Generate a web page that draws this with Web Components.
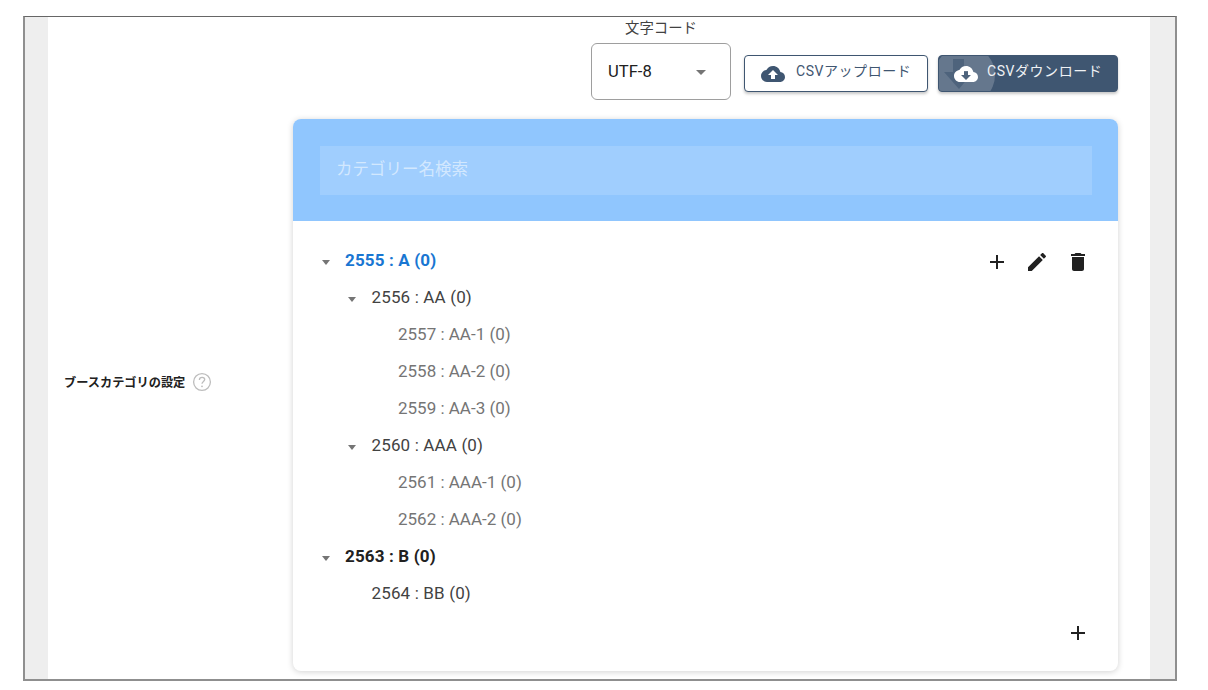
<!DOCTYPE html>
<html lang="ja">
<head>
<meta charset="utf-8">
<title>ブースカテゴリの設定</title>
<style>
    html, body {
        margin: 0;
        background: #fff;
        font-family: Roboto, "Noto Sans CJK JP", sans-serif;
    }
</style>
</head>
<body>
<settings-frame>
    <csv-toolbar slot="toolbar">
        <char-select label="文字コード" value="UTF-8"></char-select>
        <csv-button icon="upload">CSVアップロード</csv-button>
        <csv-button icon="download" filled>CSVダウンロード</csv-button>
    </csv-toolbar>
    <setting-row label="ブースカテゴリの設定">
        <category-panel placeholder="カテゴリー名検索">
            <tree-node label="2555 : A (0)" open tone="selected">
                <icon-btn slot="actions" icon="add"></icon-btn>
                <icon-btn slot="actions" icon="edit"></icon-btn>
                <icon-btn slot="actions" icon="delete"></icon-btn>
                <tree-node label="2556 : AA (0)" open tone="mid">
                    <tree-node label="2557 : AA-1 (0)" tone="leaf"></tree-node>
                    <tree-node label="2558 : AA-2 (0)" tone="leaf"></tree-node>
                    <tree-node label="2559 : AA-3 (0)" tone="leaf"></tree-node>
                </tree-node>
                <tree-node label="2560 : AAA (0)" open tone="mid">
                    <tree-node label="2561 : AAA-1 (0)" tone="leaf"></tree-node>
                    <tree-node label="2562 : AAA-2 (0)" tone="leaf"></tree-node>
                </tree-node>
            </tree-node>
            <tree-node label="2563 : B (0)" open tone="root">
                <tree-node label="2564 : BB (0)" tone="mid"></tree-node>
            </tree-node>
            <icon-btn slot="footer" icon="add"></icon-btn>
        </category-panel>
    </setting-row>
</settings-frame>

<script>
const ICONS = {
    add: 'M19 13h-6v6h-2v-6H5v-2h6V5h2v6h6v2z',
    edit: 'M3 17.25V21h3.75L17.81 9.94l-3.75-3.75L3 17.25zM20.71 7.04c.39-.39.39-1.02 0-1.41l-2.34-2.34c-.39-.39-1.02-.39-1.41 0l-1.83 1.83 3.75 3.75 1.83-1.83z',
    delete: 'M6 19c0 1.1.9 2 2 2h8c1.1 0 2-.9 2-2V7H6v12zM19 4h-3.5l-1-1h-5l-1 1H5v2h14V4z',
    upload: 'M19.35 10.04C18.67 6.59 15.64 4 12 4 9.11 4 6.6 5.64 5.35 8.04 2.34 8.36 0 10.91 0 14c0 3.31 2.69 6 6 6h13c2.76 0 5-2.24 5-5 0-2.64-2.05-4.78-4.65-4.96zM14 13v4h-4v-4H7l5-5 5 5h-3z',
    download: 'M19.35 10.04C18.67 6.59 15.64 4 12 4 9.11 4 6.6 5.64 5.35 8.04 2.34 8.36 0 10.91 0 14c0 3.31 2.69 6 6 6h13c2.76 0 5-2.24 5-5 0-2.64-2.05-4.78-4.65-4.96zM17 13l-5 5-5-5h3V9h4v4h3z'
};

function svgIcon(name, size) {
    return `<svg width="${size}" height="${size}" viewBox="0 0 24 24" fill="currentColor"><path d="${ICONS[name]}"/></svg>`;
}

class SettingsFrame extends HTMLElement {
    constructor() {
        super();
        this.attachShadow({ mode: 'open' });
        this.shadowRoot.innerHTML = `
            <style>
                :host {
                    display: block;
                    box-sizing: border-box;
                    width: 1154px;
                    height: 665px;
                    margin: 16px 0 0 23px;
                    background: #eeeeee;
                    border: 2px solid #8f8f8f;
                    border-top: 1px solid #666;
                    padding: 0 25px 0 23px;
                    overflow: hidden;
                }
                .main {
                    background: #fff;
                    height: 100%;
                }
            </style>
            <div class="main">
                <slot name="toolbar"></slot>
                <slot></slot>
            </div>
        `;
    }
}

class CsvToolbar extends HTMLElement {
    constructor() {
        super();
        this.attachShadow({ mode: 'open' });
        this.shadowRoot.innerHTML = `
            <style>
                :host {
                    display: flex;
                    justify-content: flex-end;
                    align-items: flex-end;
                    gap: 10px;
                    height: 76px;
                    padding-right: 32px;
                }
            </style>
            <slot></slot>
        `;
    }
}

class CharSelect extends HTMLElement {
    constructor() {
        super();
        this.attachShadow({ mode: 'open' });
        this.shadowRoot.innerHTML = `
            <style>
                :host {
                    display: block;
                    width: 140px;
                    margin-right: 3px;
                    margin-bottom: -7px;
                    color: #424242;
                }
                .label {
                    height: 26px;
                    line-height: 24px;
                    font-size: 14.4px;
                    text-align: center;
                }
                .box {
                    box-sizing: border-box;
                    height: 57px;
                    border: 1px solid #9e9e9e;
                    border-radius: 6px;
                    background: #fff;
                    display: flex;
                    align-items: center;
                    justify-content: space-between;
                    padding: 0 24px 0 16px;
                    font-size: 16.6px;
                    line-height: 54px;
                }
                .value { margin-top: 1px; color: #212121; }
                .arrow {
                    width: 0;
                    height: 0;
                    margin-top: 2px;
                    border: 5px solid transparent;
                    border-top-color: #757575;
                    border-bottom-width: 0;
                }
            </style>
            <div class="label">${this.getAttribute('label')}</div>
            <div class="box">
                <span class="value">${this.getAttribute('value')}</span>
                <span class="arrow"></span>
            </div>
        `;
    }
}

class CsvButton extends HTMLElement {
    constructor() {
        super();
        this.attachShadow({ mode: 'open' });
        const filled = this.hasAttribute('filled');
        this.shadowRoot.innerHTML = `
            <style>
                :host {
                    display: block;
                    margin-bottom: 1px;
                }
                button {
                    position: relative;
                    display: flex;
                    align-items: center;
                    box-sizing: border-box;
                    height: 37px;
                    width: ${filled ? 180 : 184}px;
                    padding: 0 0 0 16px;
                    gap: 11px;
                    font: 400 14px Roboto, "Noto Sans CJK JP", sans-serif;
                    letter-spacing: 0.55px;
                    border-radius: 4px;
                    overflow: hidden;
                    white-space: nowrap;
                    background: ${filled ? '#3f5671' : '#fff'};
                    color: ${filled ? '#eef1f4' : '#3f5671'};
                    border: 1px solid #3f5671;
                    box-shadow: 0 2px 3px rgba(0, 0, 0, .22);
                }
                button.filled { padding-left: 15px; gap: 9px; }
                svg { flex: none; position: relative; }
                span { position: relative; margin-top: -7px; }
                .ripple {
                    position: absolute;
                    left: -1px;
                    top: -1px;
                    color: #fff;
                }
                .icon { color: ${filled ? '#fff' : '#3f5671'}; margin: 0; display: flex; }
            </style>
            <button class="${filled ? 'filled' : ''}">
                ${filled ? `<svg class="ripple" width="62" height="37" viewBox="0 0 62 37">
                    <circle cx="27" cy="20" r="30" fill="#fff" fill-opacity=".2"/>
                    <path d="M15 4h11v13h9L21 34 6 17h9z" fill="#3f5671" fill-opacity=".6"/>
                </svg>` : ''}
                <span class="icon">${svgIcon(this.getAttribute('icon'), 24)}</span>
                <span><slot></slot></span>
            </button>
        `;
    }
}

class SettingRow extends HTMLElement {
    constructor() {
        super();
        this.attachShadow({ mode: 'open' });
        this.shadowRoot.innerHTML = `
            <style>
                :host {
                    display: flex;
                    align-items: center;
                    padding-right: 32px;
                }
                .label {
                    flex: none;
                    width: 245px;
                    box-sizing: border-box;
                    padding-left: 16px;
                    display: flex;
                    align-items: center;
                    gap: 7px;
                    font-size: 12.2px;
                    font-weight: 700;
                    color: #212121;
                }
                svg { color: #bdbdbd; }
                .body { flex: 1; min-width: 0; padding-top: 26px; }
            </style>
            <div class="label">
                <span>${this.getAttribute('label')}</span>
                <svg width="20" height="20" viewBox="0 0 20 20" fill="none" stroke="currentColor">
                    <circle cx="10" cy="10" r="8.4" stroke-width="1.3"/>
                    <path d="M7.4 8c0-1.6 1.2-2.6 2.7-2.6s2.6 1 2.6 2.2c0 1.8-2.7 2-2.7 4.2" stroke-width="1.3"/>
                    <circle cx="10" cy="14.3" r=".9" fill="currentColor" stroke="none"/>
                </svg>
            </div>
            <div class="body"><slot></slot></div>
        `;
    }
}

class CategoryPanel extends HTMLElement {
    constructor() {
        super();
        this.attachShadow({ mode: 'open' });
        this.shadowRoot.innerHTML = `
            <style>
                :host {
                    display: block;
                    background: #fff;
                    border-radius: 8px;
                    box-shadow: 0 1px 6px rgba(0, 0, 0, .18);
                    overflow: hidden;
                }
                .head {
                    height: 102px;
                    box-sizing: border-box;
                    background: #90c6fe;
                    padding: 27px 26px 0 27px;
                }
                .search {
                    height: 49px;
                    background: rgba(255, 255, 255, .15);
                    padding-left: 16px;
                    line-height: 48px;
                    font-size: 16.5px;
                    color: rgba(255, 255, 255, .55);
                }
                .tree { padding: 21px 26px 0 27px; }
                .foot {
                    display: flex;
                    justify-content: flex-end;
                    padding: 1px 20px 18px 0;
                }
            </style>
            <div class="head"><div class="search">${this.getAttribute('placeholder')}</div></div>
            <div class="tree"><slot></slot></div>
            <div class="foot"><slot name="footer"></slot></div>
        `;
    }
}

class TreeNode extends HTMLElement {
    constructor() {
        super();
        this.attachShadow({ mode: 'open' });
        const open = this.hasAttribute('open');
        const tone = this.getAttribute('tone') || 'mid';
        const colors = { selected: '#1976d2', root: '#212121', mid: '#424242', leaf: '#757575' };
        const weight = tone === 'selected' || tone === 'root' ? 700 : 400;
        this.shadowRoot.innerHTML = `
            <style>
                :host { display: block; }
                .row {
                    display: flex;
                    align-items: center;
                    height: 37px;
                    font-size: 17px;
                    line-height: 37px;
                    letter-spacing: ${tone === 'leaf' ? 0 : 0.15}px;
                    color: ${colors[tone]};
                    font-weight: ${weight};
                }
                .toggle {
                    flex: none;
                    width: 25px;
                    display: flex;
                    align-items: center;
                }
                .arrow {
                    width: 0;
                    height: 0;
                    margin: 3px 0 0 1.5px;
                    border: 4.5px solid transparent;
                    border-top: 5px solid #757575;
                    border-bottom-width: 0;
                }
                .actions {
                    margin-left: auto;
                    display: flex;
                    margin-top: 2px;
                    margin-right: -6px;
                }
                .kids { padding-left: 26.5px; }
            </style>
            <div class="row">
                <span class="toggle">${open ? '<span class="arrow"></span>' : ''}</span>
                <span>${this.getAttribute('label')}</span>
                <span class="actions"><slot name="actions"></slot></span>
            </div>
            <div class="kids"><slot></slot></div>
        `;
    }
}

class IconBtn extends HTMLElement {
    constructor() {
        super();
        this.attachShadow({ mode: 'open' });
        this.shadowRoot.innerHTML = `
            <style>
                :host {
                    display: flex;
                    align-items: center;
                    justify-content: center;
                    width: 40.5px;
                    height: 40px;
                    color: #212121;
                }
            </style>
            ${svgIcon(this.getAttribute('icon'), 24)}
        `;
    }
}

customElements.define('settings-frame', SettingsFrame);
customElements.define('csv-toolbar', CsvToolbar);
customElements.define('char-select', CharSelect);
customElements.define('csv-button', CsvButton);
customElements.define('setting-row', SettingRow);
customElements.define('category-panel', CategoryPanel);
customElements.define('tree-node', TreeNode);
customElements.define('icon-btn', IconBtn);
</script>
</body>
</html>
